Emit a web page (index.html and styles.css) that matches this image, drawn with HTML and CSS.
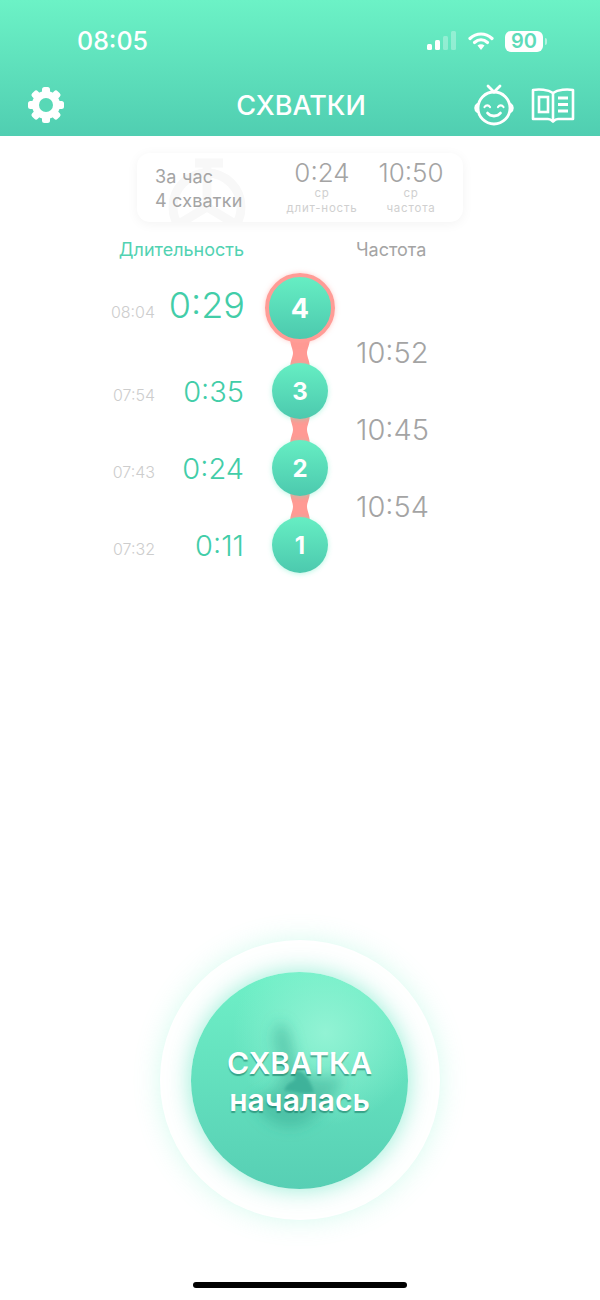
FILE: index.html
```html
<!DOCTYPE html>
<html>

<head>
  <title>Схватки</title>
  <link rel="stylesheet" href="styles.css">
</head>

<body>
  <svg class="defs" width="0" height="0">
    <symbol id="link" viewBox="0 0 24 32" preserveAspectRatio="none">
      <path d="M2 0H22C22 8 19 12 19 16C19 20 22 24 22 32H2C2 24 5 20 5 16C5 12 2 8 2 0Z" />
    </symbol>
  </svg>

  <div class="page">
    <header class="header">
      <div class="status">
        <span class="clock">08:05</span>
        <div class="status-icons">
          <svg width="30" height="20" viewBox="0 0 30 20">
            <rect x="0" y="13" width="5" height="6" rx="1.5" fill="#fff" />
            <rect x="8" y="9" width="5" height="10" rx="1.5" fill="#fff" />
            <rect x="16" y="5" width="5" height="14" rx="1.5" fill="#fff" fill-opacity=".3" />
            <rect x="24" y="0" width="5" height="19" rx="1.5" fill="#fff" fill-opacity=".3" />
          </svg>
          <svg width="26" height="20" viewBox="0 0 26 20">
            <path d="M2 7.5C8.500 1.500 17.500 1.500 24 7.500" fill="none" stroke="#fff" stroke-width="3.200" stroke-linecap="round" />
            <path d="M6.500 11.500C10.500 8 15.500 8 19.500 11.500" fill="none" stroke="#fff" stroke-width="3.200" stroke-linecap="round" />
            <path d="M9.500 14.500C11.500 12.800 14.500 12.800 16.500 14.500L13 19Z" fill="#fff" />
          </svg>
          <div class="battery"><span class="battery-level">90</span></div>
        </div>
      </div>
      <nav class="nav">
        <svg class="gear" width="38" height="38" viewBox="0 0 38 38">
          <g fill="#fff">
            <rect x="15" y="1" width="8" height="36" rx="2.500" />
            <rect x="15" y="1" width="8" height="36" rx="2.500" transform="rotate(45 19 19)" />
            <rect x="15" y="1" width="8" height="36" rx="2.500" transform="rotate(90 19 19)" />
            <rect x="15" y="1" width="8" height="36" rx="2.500" transform="rotate(135 19 19)" />
          </g>
          <circle cx="19" cy="19" r="10.500" fill="none" stroke="#fff" stroke-width="7" />
          <circle cx="19" cy="19" r="7" fill="#58d8b6" />
        </svg>
        <h1 class="title">СХВАТКИ</h1>
        <div class="nav-right">
          <svg width="44" height="44" viewBox="0 0 44 44" fill="none" stroke="#fff" stroke-width="2.800" stroke-linecap="round">
            <circle cx="22" cy="25" r="16" />
            <path d="M5.500 21.500C3 23 3 27 5.500 28.500M38.500 21.500C41 23 41 27 38.500 28.500" />
            <path d="M16 3L22 9L28 3" />
            <path d="M12.500 24C14 21.800 16.500 21.800 18 24M26 24C27.500 21.800 30 21.800 31.500 24" stroke-width="2.200" />
            <path d="M15.500 30C18.500 34 25.500 34 28.500 30" />
          </svg>
          <svg width="44" height="36" viewBox="0 0 44 36" fill="none" stroke="#fff" stroke-width="2.600">
            <path d="M22 6C17 2.500 8 2 2 3V32H17C19 32 20.500 33 22 34.500C23.500 33 25 32 27 32H42V3C36 2 27 2.500 22 6Z" stroke-linejoin="round" />
            <path d="M22 6V34" />
            <rect x="8" y="10" width="9" height="15" />
            <path d="M27 11H37M27 17.500H37M27 24H37" stroke-width="3" />
          </svg>
        </div>
      </nav>
    </header>

    <section class="summary">
      <svg class="wheel" width="110" height="90" viewBox="0 0 110 90" fill="none" stroke="#f8f8f8" stroke-width="9">
        <circle cx="50" cy="50" r="34" />
        <path d="M50 4V50M20 68L50 50L80 68" />
        <path d="M38 6H66" />
      </svg>
      <div class="summary-label">За час<br>4 схватки</div>
      <div class="summary-stat stat-duration">
        <div class="stat-value">0:24</div>
        <div class="stat-label">ср<br>длит-ность</div>
      </div>
      <div class="summary-stat stat-interval">
        <div class="stat-value">10:50</div>
        <div class="stat-label">ср<br>частота</div>
      </div>
    </section>

    <div class="timeline">
      <div class="head-duration">Длительность</div>
      <div class="head-interval">Частота</div>

      <div class="time first">08:04</div>
      <div class="duration big">0:29</div>
      <div class="node-cell"><div class="node active">4</div></div>
      <div></div>

      <div></div>
      <div></div>
      <svg class="link"><use href="#link" /></svg>
      <div class="interval">10:52</div>

      <div class="time">07:54</div>
      <div class="duration">0:35</div>
      <div class="node-cell"><div class="node">3</div></div>
      <div></div>

      <div></div>
      <div></div>
      <svg class="link"><use href="#link" /></svg>
      <div class="interval">10:45</div>

      <div class="time">07:43</div>
      <div class="duration">0:24</div>
      <div class="node-cell"><div class="node">2</div></div>
      <div></div>

      <div></div>
      <div></div>
      <svg class="link"><use href="#link" /></svg>
      <div class="interval">10:54</div>

      <div class="time">07:32</div>
      <div class="duration">0:11</div>
      <div class="node-cell"><div class="node">1</div></div>
      <div></div>
    </div>

    <div class="action">
      <div class="action-ring">
        <button class="action-button">
          <svg class="figure" width="217" height="217" viewBox="0 0 217 217">
            <defs>
              <filter id="soft" x="-40%" y="-40%" width="180%" height="180%"><feGaussianBlur stdDeviation="7" /></filter>
              <filter id="softer" x="-40%" y="-40%" width="180%" height="180%"><feGaussianBlur stdDeviation="1.500" /></filter>
            </defs>
            <path d="M88 50C102 54 100 78 106 92C114 104 130 110 152 102C146 124 130 146 108 154C90 158 72 150 62 128C86 124 96 104 88 86C82 74 80 62 88 50Z" fill="#35a48e" fill-opacity=".45" filter="url(#soft)" />
            <path d="M102 100C112 96 118 106 123 120C112 124 102 118 94 119C92 118 96 112 100 110C106 108 104 104 102 100Z" fill="#3aae96" fill-opacity=".85" filter="url(#softer)" />
          </svg>
          <span class="action-text">СХВАТКА<br>началась</span>
        </button>
      </div>
    </div>

    <div class="home-bar"></div>
  </div>
</body>

</html>
```

FILE: styles.css
```css
* {
  box-sizing: border-box;
}

body {
  margin: 0;
  background: #fff;
  font-family: Inter, "Liberation Sans", sans-serif;
}

.defs {
  position: absolute;
}

.page {
  display: flex;
  flex-direction: column;
  height: 1300px;
  overflow: hidden;
}

/* header */
.header {
  height: 136px;
  background: linear-gradient(180deg, #6cf2c6 0%, #50ceb1 100%);
  color: #fff;
}

.status {
  display: flex;
  justify-content: space-between;
  align-items: center;
  height: 82px;
  padding: 0 53px 0 77px;
}

.clock {
  font-size: 25px;
  font-weight: 500;
}

.status-icons {
  display: flex;
  align-items: center;
  gap: 11px;
}

.battery {
  position: relative;
  display: flex;
  justify-content: center;
  align-items: center;
  width: 38px;
  height: 21px;
  margin-right: 4px;
  border-radius: 6px;
  background: #fff;
}

.battery::after {
  content: "";
  position: absolute;
  right: -4px;
  top: 7px;
  width: 2px;
  height: 7px;
  border-radius: 0 2px 2px 0;
  background: rgba(255, 255, 255, .5);
}

.battery-level {
  font-size: 20px;
  font-weight: 600;
  color: #5ddbb9;
}

.nav {
  display: grid;
  grid-template-columns: 1fr auto 1fr;
  align-items: center;
  height: 46px;
  padding: 0 25px 0 27px;
}

.title {
  margin: 0;
  text-align: center;
  font-size: 27px;
  font-weight: 500;
}

.nav-right {
  display: flex;
  justify-content: flex-end;
  align-items: center;
  gap: 15px;
}

/* summary card */
.summary {
  position: relative;
  display: flex;
  align-self: center;
  flex: none;
  width: 326px;
  height: 69px;
  margin-top: 17px;
  padding-left: 18px;
  overflow: hidden;
  border-radius: 13px;
  background: #fff;
  box-shadow: 0 2px 12px rgba(0, 0, 0, .05);
  color: #a4a4a4;
}

.wheel {
  position: absolute;
  left: 20px;
  top: 4px;
}

.summary-label {
  position: relative;
  width: 122px;
  padding-top: 12px;
  font-size: 18px;
  line-height: 24px;
  letter-spacing: .2px;
}

.summary-stat {
  position: relative;
  text-align: center;
}

.stat-duration {
  width: 90px;
}

.stat-interval {
  width: 88px;
}

.stat-value {
  margin-top: 4px;
  font-size: 26px;
  font-weight: 300;
  line-height: 32px;
}

.stat-label {
  margin-top: -3px;
  font-size: 11.5px;
  line-height: 15px;
  letter-spacing: .8px;
  color: #d0d0d0;
}

/* timeline */
.timeline {
  display: grid;
  grid-template-columns: 155px 89px 112px 1fr;
  grid-template-rows: 38px 70px 20px 56px 21px 56px 21px 56px;
  align-items: center;
  margin-top: 13px;
}

.head-duration {
  grid-column: 1 / 3;
  align-self: start;
  height: 30px;
  line-height: 30px;
  text-align: right;
  font-size: 18px;
  color: #52d2b2;
}

.head-interval {
  grid-column: 3 / 5;
  align-self: start;
  height: 30px;
  line-height: 30px;
  padding-left: 112px;
  font-size: 18px;
  color: #a4a4a4;
}

.time {
  padding-top: 8px;
  text-align: right;
  font-size: 16px;
  font-weight: 300;
  color: #cdcdcd;
}

.duration {
  text-align: right;
  font-size: 29px;
  font-weight: 300;
  color: #42cda8;
}

.duration.big {
  padding-bottom: 6px;
  margin-right: -1px;
  font-size: 36px;
}

.node-cell {
  position: relative;
  z-index: 1;
  display: flex;
  justify-content: center;
}

.node {
  display: flex;
  justify-content: center;
  align-items: center;
  width: 56px;
  height: 56px;
  border-radius: 50%;
  background: linear-gradient(180deg, #66eec3 0%, #4cc9ae 100%);
  box-shadow: 0 1px 5px rgba(102, 238, 195, .45);
  font-size: 24px;
  font-weight: 700;
  color: #fff;
}

.node.active {
  width: 70px;
  height: 70px;
  border: 4px solid #ff9c96;
  box-shadow: 0 0 5px rgba(255, 156, 150, .5);
  font-size: 27px;
}

.link {
  justify-self: center;
  width: 24px;
  height: calc(100% + 12px);
  fill: #ff9a94;
}

.interval {
  height: 20px;
  line-height: 20px;
  white-space: nowrap;
  font-size: 29px;
  font-weight: 300;
  color: #a4a4a4;
}

/* big button */
.action {
  display: flex;
  justify-content: center;
  margin-top: auto;
  padding-bottom: 62px;
}

.action-ring {
  display: flex;
  justify-content: center;
  align-items: center;
  width: 280px;
  height: 280px;
  padding-right: 1px;
  border-radius: 50%;
  background: #fff;
  box-shadow: 0 0 26px rgba(108, 242, 198, .28);
}

.action-button {
  position: relative;
  width: 217px;
  height: 217px;
  padding: 4px 0 0;
  overflow: visible;
  border: none;
  border-radius: 50%;
  background: radial-gradient(circle at 62% 28%, #92f3d4 0%, rgba(146, 243, 212, 0) 45%), linear-gradient(180deg, #6ff0c7 0%, #57cfb4 100%);
  box-shadow: 0 0 24px rgba(90, 228, 190, .65);
  font-family: inherit;
}

.figure {
  position: absolute;
  left: 0;
  top: 0;
}

.action-text {
  position: relative;
  font-size: 30px;
  font-weight: 600;
  line-height: 37px;
  color: #fff;
  text-shadow: 0 2px 1px rgba(0, 90, 70, .45);
}

.home-bar {
  align-self: center;
  flex: none;
  width: 214px;
  height: 6px;
  margin-bottom: 12px;
  border-radius: 3px;
  background: #000;
}
```
